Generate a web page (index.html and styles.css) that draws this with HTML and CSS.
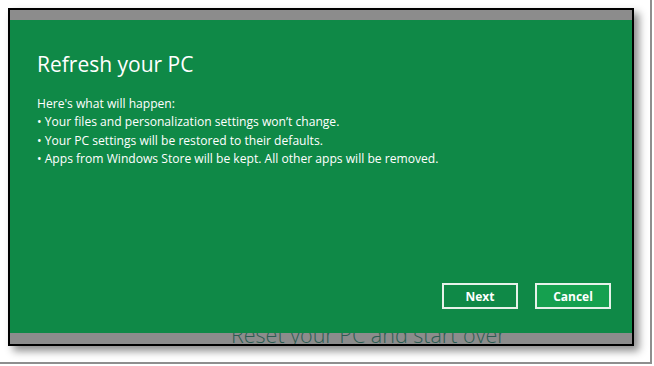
FILE: index.html
```html
<!DOCTYPE html>
<html lang="en">
<head>
    <meta charset="UTF-8">
    <meta name="viewport" content="width=device-width, initial-scale=1.0">
    <title>Refresh your PC</title>
    <link rel="stylesheet" href="styles.css">
</head>
<body>

<div class="page">
    <div class="frame">
        <div class="strip-top"></div>

        <div class="panel">
            <h1>Refresh your PC</h1>
            <div class="info">
                <p>Here's what will happen:</p>
                <p>&bull; Your files and personalization settings won’t change.</p>
                <p>&bull; Your PC settings will be restored to their defaults.</p>
                <p>&bull; Apps from Windows Store will be kept. All other apps will be removed.</p>
            </div>
            <div class="actions">
                <button class="btn">Next</button>
                <button class="btn cancel">Cancel</button>
            </div>
        </div>

        <!-- the page behind the dialog peeks out here -->
        <div class="strip-bottom">
            <div class="behind">Reset your PC and start over</div>
        </div>
    </div>
</div>

</body>
</html>
```

FILE: styles.css
```css
* {
    box-sizing: border-box;
}

body {
    margin: 0;
    background-color: #fff;
    font-family: "Open Sans", "Noto Sans", sans-serif;
}

.page {
    width: 652px;
    height: 364px;
    margin: 0;
    padding: 8px 0 0 8px;
    border-right: 2px solid #8e8e8e;
    border-bottom: 2px solid #8e8e8e;
}

.frame {
    width: 626px;
    height: 338px;
    border: 2px solid #000;
    background-color: #8c8c8c;
    box-shadow: 5px 5px 8px rgba(0, 0, 0, 0.45);
    display: flex;
    flex-direction: column;
}

.strip-top {
    height: 10px;
    flex-shrink: 0;
}

.panel {
    flex: 1;
    background-color: #0f8947;
    color: #fff;
    padding: 30px 21px 0 27px;
    display: flex;
    flex-direction: column;
}

h1 {
    margin: 0 0 17px 0;
    font-size: 21px;
    font-weight: 400;
    line-height: 28px;
}

.info p {
    margin: 0;
    font-size: 12.1px;
    line-height: 18.4px;
}

.actions {
    margin-top: auto;
    margin-bottom: 24px;
    display: flex;
    justify-content: flex-end;
    gap: 17px;
}

.btn {
    width: 76px;
    height: 26px;
    border: 2px solid #e6f2ea;
    background-color: #0f8947;
    color: #fff;
    font-family: "Open Sans", "Noto Sans", sans-serif;
    font-size: 12px;
    font-weight: 700;
    padding: 0;
}

.btn.cancel {
    background-color: #15a04f;
}

.strip-bottom {
    height: 11px;
    flex-shrink: 0;
    overflow: hidden;
    padding-left: 221px;
    display: flex;
    align-items: flex-end;
}

.behind {
    font-size: 21.5px;
    font-weight: 300;
    line-height: 18px;
    color: #2c5d52;
    white-space: nowrap;
}
```
